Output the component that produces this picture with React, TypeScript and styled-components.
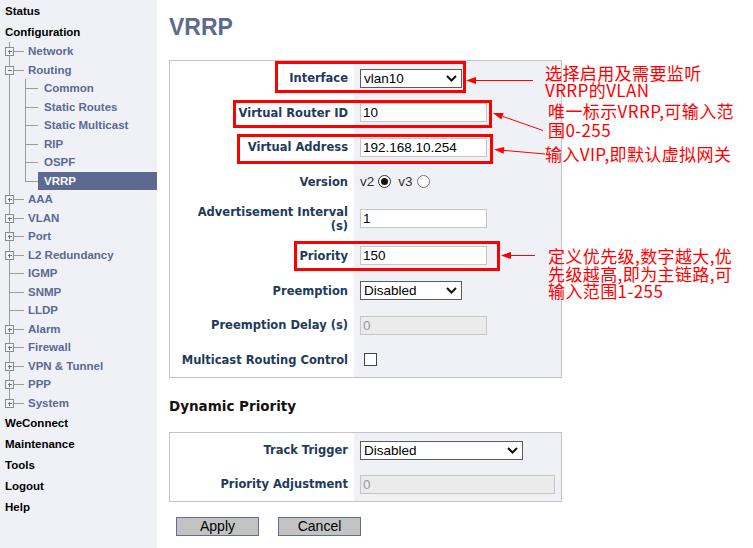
import React from "react";
import styled, { createGlobalStyle } from "styled-components";

const GlobalStyle = createGlobalStyle`
  *, *::before, *::after { box-sizing: border-box; }
  html, body { margin: 0; padding: 0; background: #fff; }
  body { font-family: "Liberation Sans", Arial, sans-serif; overflow: hidden; }
`;

const Page = styled.div`
  position: relative;
  display: flex;
  width: 753px;
  height: 548px;
  overflow: hidden;
`;

/* ---------------- Sidebar ---------------- */
const Sidebar = styled.nav`
  width: 157px;
  flex: none;
  background: #f0f1f7;
  display: flex;
  flex-direction: column;
  font-family: "Liberation Sans", Arial, sans-serif;
  font-size: 11.5px;
  font-weight: bold;
`;

const TopItem = styled.div`
  height: 21px;
  display: flex;
  align-items: center;
  padding-left: 5px;
  color: #000;
`;

const TreeRow = styled.div`
  height: 18.5px;
  display: flex;
  align-items: stretch;
`;

const TreeLabel = styled.div<{ $indent: number; $active?: boolean }>`
  flex: 1;
  display: flex;
  align-items: center;
  padding-left: ${(p) => p.$indent}px;
  color: ${(p) => (p.$active ? "#fff" : "#5a6a92")};
  background: ${(p) => (p.$active ? "#5b6a8e" : "transparent")};
  white-space: nowrap;
`;

const ConnectorSvg = styled.svg`
  flex: none;
  display: block;
`;

const LINE = "#9c9c9c";

type BoxKind = "plus" | "minus" | "none";

function TopConnector({ box, last }: { box: BoxKind; last?: boolean }) {
  const c = 9.5;
  return (
    <ConnectorSvg width={24} height={18.5} viewBox="0 0 24 18.5" shapeRendering="crispEdges">
      <line x1={9.5} y1={0} x2={9.5} y2={last ? c : 18.5} stroke={LINE} />
      <line x1={box === "none" ? 9.5 : 13.5} y1={c} x2={24} y2={c} stroke={LINE} />
      {box !== "none" && (
        <g>
          <rect x={5.5} y={5.5} width={8} height={8} fill="#f0f1f7" stroke="#8c8c8c" />
          <line x1={7.5} y1={c} x2={12} y2={c} stroke="#777" />
          {box === "plus" && <line x1={9.5} y1={7.5} x2={9.5} y2={12} stroke="#777" />}
        </g>
      )}
    </ConnectorSvg>
  );
}

function ChildConnector({ last }: { last?: boolean }) {
  const c = 9.5;
  return (
    <ConnectorSvg width={38} height={18.5} viewBox="0 0 38 18.5" shapeRendering="crispEdges">
      <line x1={9.5} y1={0} x2={9.5} y2={18.5} stroke={LINE} />
      <line x1={25.5} y1={0} x2={25.5} y2={last ? c : 18.5} stroke={LINE} />
      <line x1={25.5} y1={c} x2={38} y2={c} stroke={LINE} />
    </ConnectorSvg>
  );
}

type TreeItem = { label: string; box: BoxKind; children?: { label: string; active?: boolean }[] };

const tree: TreeItem[] = [
  { label: "Network", box: "plus" },
  {
    label: "Routing",
    box: "minus",
    children: [
      { label: "Common" },
      { label: "Static Routes" },
      { label: "Static Multicast" },
      { label: "RIP" },
      { label: "OSPF" },
      { label: "VRRP", active: true },
    ],
  },
  { label: "AAA", box: "plus" },
  { label: "VLAN", box: "plus" },
  { label: "Port", box: "plus" },
  { label: "L2 Redundancy", box: "plus" },
  { label: "IGMP", box: "none" },
  { label: "SNMP", box: "none" },
  { label: "LLDP", box: "none" },
  { label: "Alarm", box: "plus" },
  { label: "Firewall", box: "plus" },
  { label: "VPN & Tunnel", box: "plus" },
  { label: "PPP", box: "plus" },
  { label: "System", box: "plus" },
];

/* ---------------- Main ---------------- */
const Main = styled.main`
  flex: 1;
  padding: 13px 0 0 12px;
  display: flex;
  flex-direction: column;
  align-items: flex-start;
`;

const Title = styled.h1`
  margin: 0;
  font: bold 23px/28px "Liberation Sans", Arial, sans-serif;
  color: #5b6a8e;
`;

const Panel = styled.div<{ $mt: number }>`
  width: 393px;
  margin-top: ${(p) => p.$mt}px;
  border: 1px solid #c4c4c4;
  display: flex;
  flex-direction: column;
`;

const Row = styled.div<{ $h: number }>`
  height: ${(p) => p.$h}px;
  display: grid;
  grid-template-columns: 184px 1fr;
`;

const LabelCell = styled.div`
  background: #fff;
  display: flex;
  align-items: center;
  justify-content: flex-end;
  text-align: right;
  padding-right: 6px;
  font: bold 11.5px/14px "DejaVu Sans", Verdana, sans-serif;
  color: #1e3b5a;
`;

const ValueCell = styled.div`
  background: #f0f1f7;
  display: flex;
  align-items: center;
  padding-left: 6px;
  font: 13.5px "Liberation Sans", Arial, sans-serif;
  color: #333;
`;

const TextBox = styled.input<{ $w: number }>`
  width: ${(p) => p.$w}px;
  height: 19px;
  margin: 0;
  padding: 0 2px;
  border: 1px solid #c6c6c6;
  border-radius: 0;
  background: ${(p) => (p.disabled ? "#ebebeb" : "#fff")};
  color: ${(p) => (p.disabled ? "#999" : "#000")};
  font: 13.5px "Liberation Sans", Arial, sans-serif;
  outline: none;
`;

const SelectBox = styled.div<{ $w: number }>`
  width: ${(p) => p.$w}px;
  height: 19px;
  border: 1px solid #5c5c5c;
  background: #fff;
  display: flex;
  align-items: center;
  justify-content: space-between;
  padding: 0 4px 0 3px;
  font: 13.5px "Liberation Sans", Arial, sans-serif;
  color: #000;
`;

function Chevron() {
  return (
    <svg width="11" height="7" viewBox="0 0 11 7">
      <path d="M1 1 L5.5 5.5 L10 1" fill="none" stroke="#111" strokeWidth="2" />
    </svg>
  );
}

function Select({ value, w }: { value: string; w: number }) {
  return (
    <SelectBox $w={w}>
      <span>{value}</span>
      <Chevron />
    </SelectBox>
  );
}

const OptText = styled.span<{ $ml: number }>`
  margin-left: ${(p) => p.$ml}px;
  color: #333;
`;

const Radio = styled.span<{ $checked?: boolean }>`
  width: 13px;
  height: 13px;
  margin-left: 4px;
  border-radius: 50%;
  border: 1px solid ${(p) => (p.$checked ? "#333" : "#767676")};
  background: #fff;
  display: inline-flex;
  align-items: center;
  justify-content: center;
  &::after {
    content: "";
    width: 7px;
    height: 7px;
    border-radius: 50%;
    background: ${(p) => (p.$checked ? "#111" : "transparent")};
  }
`;

const Checkbox = styled.span`
  width: 13px;
  height: 13px;
  margin-left: 4px;
  border: 1px solid #444;
  background: #fff;
`;

const SectionHeading = styled.h2`
  margin: 19px 0 17px;
  font: bold 13.5px/18px "DejaVu Sans", Verdana, sans-serif;
  color: #111;
`;

const ButtonBar = styled.div`
  margin-top: 15px;
  padding-left: 7px;
  display: flex;
  gap: 19px;
`;

const Button = styled.button`
  width: 83px;
  height: 19px;
  padding: 0;
  margin: 0;
  background: #c3c3c3;
  border: 1px solid #5e6e94;
  border-radius: 0;
  font: 14px/17px "Liberation Sans", Arial, sans-serif;
  color: #000;
`;

/* ---------------- Annotations (overlay) ---------------- */
const RedBox = styled.div<{ $x: number; $y: number; $w: number; $h: number }>`
  position: absolute;
  left: ${(p) => p.$x}px;
  top: ${(p) => p.$y}px;
  width: ${(p) => p.$w}px;
  height: ${(p) => p.$h}px;
  border: 3px solid #ff0000;
  pointer-events: none;
`;

const Note = styled.div<{ $x: number; $y: number; $lh: number }>`
  position: absolute;
  left: ${(p) => p.$x}px;
  top: ${(p) => p.$y}px;
  line-height: ${(p) => p.$lh}px;
  font-size: 17px;
  letter-spacing: 0.4px;
  font-family: "Noto Sans CJK SC", "Noto Sans", sans-serif;
  color: #ff0000;
  white-space: nowrap;
  pointer-events: none;
`;

const ArrowLayer = styled.svg`
  position: absolute;
  left: 0;
  top: 0;
  pointer-events: none;
`;

function Arrow({ tail, tip }: { tail: [number, number]; tip: [number, number] }) {
  const [x1, y1] = tail;
  const [x2, y2] = tip;
  const dx = x1 - x2;
  const dy = y1 - y2;
  const len = Math.hypot(dx, dy);
  const ux = dx / len;
  const uy = dy / len;
  const hl = 10;
  const hw = 3.5;
  const bx = x2 + ux * hl;
  const by = y2 + uy * hl;
  const p1 = `${bx - uy * hw},${by + ux * hw}`;
  const p2 = `${bx + uy * hw},${by - ux * hw}`;
  return (
    <g>
      <line x1={x1} y1={y1} x2={bx} y2={by} stroke="#ff0000" strokeWidth="1" />
      <polygon points={`${x2},${y2} ${p1} ${p2}`} fill="#ff0000" />
    </g>
  );
}

export default function App() {
  return (
    <>
      <GlobalStyle />
      <Page>
        <Sidebar>
          <TopItem>Status</TopItem>
          <TopItem>Configuration</TopItem>
          {tree.map((item, i) => (
            <React.Fragment key={item.label}>
              <TreeRow>
                <TopConnector box={item.box} last={i === tree.length - 1} />
                <TreeLabel $indent={4}>{item.label}</TreeLabel>
              </TreeRow>
              {item.children?.map((ch, j) => (
                <TreeRow key={ch.label}>
                  <ChildConnector last={j === item.children!.length - 1} />
                  <TreeLabel $indent={6} $active={ch.active}>
                    {ch.label}
                  </TreeLabel>
                </TreeRow>
              ))}
            </React.Fragment>
          ))}
          <TopItem>WeConnect</TopItem>
          <TopItem>Maintenance</TopItem>
          <TopItem>Tools</TopItem>
          <TopItem>Logout</TopItem>
          <TopItem>Help</TopItem>
        </Sidebar>

        <Main>
          <Title>VRRP</Title>
          <Panel $mt={19}>
            <Row $h={34}>
              <LabelCell>Interface</LabelCell>
              <ValueCell>
                <Select value="vlan10" w={102} />
              </ValueCell>
            </Row>
            <Row $h={35}>
              <LabelCell>Virtual Router ID</LabelCell>
              <ValueCell>
                <TextBox $w={127} defaultValue="10" />
              </ValueCell>
            </Row>
            <Row $h={34}>
              <LabelCell>Virtual Address</LabelCell>
              <ValueCell>
                <TextBox $w={127} defaultValue="192.168.10.254" />
              </ValueCell>
            </Row>
            <Row $h={35}>
              <LabelCell>Version</LabelCell>
              <ValueCell>
                <OptText $ml={0}>v2</OptText>
                <Radio $checked />
                <OptText $ml={7}>v3</OptText>
                <Radio />
              </ValueCell>
            </Row>
            <Row $h={39}>
              <LabelCell>
                Advertisement Interval
                <br />
                (s)
              </LabelCell>
              <ValueCell>
                <TextBox $w={127} defaultValue="1" />
              </ValueCell>
            </Row>
            <Row $h={35}>
              <LabelCell>Priority</LabelCell>
              <ValueCell>
                <TextBox $w={127} defaultValue="150" />
              </ValueCell>
            </Row>
            <Row $h={35}>
              <LabelCell>Preemption</LabelCell>
              <ValueCell>
                <Select value="Disabled" w={102} />
              </ValueCell>
            </Row>
            <Row $h={34}>
              <LabelCell>Preemption Delay (s)</LabelCell>
              <ValueCell>
                <TextBox $w={127} defaultValue="0" disabled />
              </ValueCell>
            </Row>
            <Row $h={35}>
              <LabelCell>Multicast Routing Control</LabelCell>
              <ValueCell>
                <Checkbox />
              </ValueCell>
            </Row>
          </Panel>

          <SectionHeading>Dynamic Priority</SectionHeading>
          <Panel $mt={0}>
            <Row $h={34}>
              <LabelCell>Track Trigger</LabelCell>
              <ValueCell>
                <Select value="Disabled" w={163} />
              </ValueCell>
            </Row>
            <Row $h={34}>
              <LabelCell>Priority Adjustment</LabelCell>
              <ValueCell>
                <TextBox $w={195} defaultValue="0" disabled />
              </ValueCell>
            </Row>
          </Panel>

          <ButtonBar>
            <Button>Apply</Button>
            <Button>Cancel</Button>
          </ButtonBar>
        </Main>

        <RedBox $x={275} $y={61} $w={191} $h={32} />
        <RedBox $x={233} $y={100} $w={259} $h={28} />
        <RedBox $x={237} $y={134} $w={256} $h={30} />
        <RedBox $x={294} $y={241} $w={206} $h={30} />

        <ArrowLayer width={753} height={548} viewBox="0 0 753 548">
          <Arrow tail={[533, 80.5]} tip={[466, 80.5]} />
          <Arrow tail={[543, 130.5]} tip={[493, 113]} />
          <Arrow tail={[545, 154]} tip={[494, 149.5]} />
          <Arrow tail={[535, 255.5]} tip={[501, 255.5]} />
        </ArrowLayer>

        <Note $x={545} $y={64} $lh={17}>
          选择启用及需要监听
          <br />
          VRRP的VLAN
        </Note>
        <Note $x={548} $y={101} $lh={19}>
          唯一标示VRRP,可输入范
          <br />
          围0-255
        </Note>
        <Note $x={545} $y={145} $lh={18}>
          输入VIP,即默认虚拟网关
        </Note>
        <Note $x={548} $y={247} $lh={17.5}>
          定义优先级,数字越大,优
          <br />
          先级越高,即为主链路,可
          <br />
          输入范围1-255
        </Note>
      </Page>
    </>
  );
}
